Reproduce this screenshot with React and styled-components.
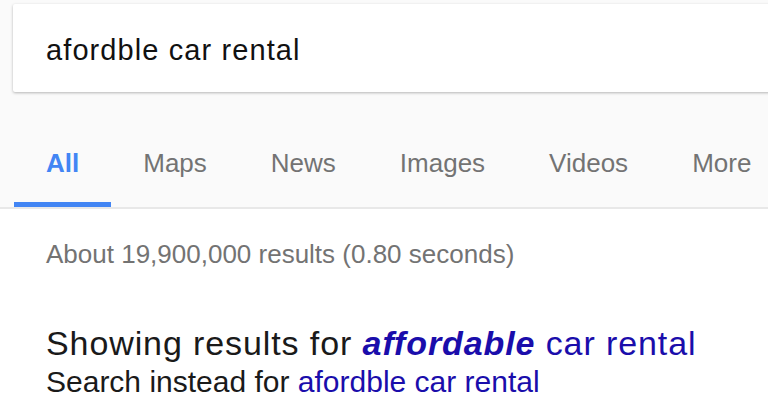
import styled, { createGlobalStyle } from 'styled-components';

const GlobalStyle = createGlobalStyle`
	html, body {
		margin: 0;
		padding: 0;
		background: #fff;
		overflow: hidden;
	}
	body {
		font-family: 'Liberation Sans', Arial, Helvetica, sans-serif;
	}
`;

const Header = styled.header`
	background: #fafafa;
	padding-top: 4px;
	border-bottom: 2px solid #e8e8e8;
`;

const SearchBox = styled.div`
	box-sizing: border-box;
	margin-left: 13px;
	width: calc(100% + 20px);
	height: 88px;
	padding: 5px 0 0 33px;
	background: #fff;
	border-radius: 2px;
	box-shadow: 0 1px 3px rgba(0, 0, 0, 0.28);
	font-size: 29px;
	line-height: 83px;
	letter-spacing: 1.1px;
	color: #111;
	white-space: nowrap;
`;

const Tabs = styled.nav`
	display: flex;
	padding: 56px 0 0 14px;
`;

const Tab = styled.a`
	display: block;
	padding: 0 32px 24px;
	font-size: 26px;
	line-height: 30px;
	font-weight: ${(p) => (p.$active ? 'bold' : 'normal')};
	color: ${(p) => (p.$active ? '#4285f4' : '#737373')};
	border-bottom: 5px solid ${(p) => (p.$active ? '#4285f4' : 'transparent')};
	white-space: nowrap;
	cursor: pointer;
`;

const Results = styled.main`
	padding: 30px 0 0 46px;
	background: #fff;
`;

const Stats = styled.p`
	margin: 0;
	font-size: 26px;
	line-height: 30px;
	color: #737373;
`;

const Spelling = styled.p`
	margin: 54px 0 0;
	font-size: 34px;
	line-height: 41px;
	letter-spacing: 0.9px;
	color: #1a1a1a;
	white-space: nowrap;
`;

const Instead = styled.p`
	margin: 0;
	font-size: 30px;
	line-height: 36px;
	color: #1a1a1a;
	white-space: nowrap;
`;

const Link = styled.a`
	color: #1a0dab;
	text-decoration: none;
	cursor: pointer;

	b {
		font-style: italic;
		font-weight: bold;
	}
`;

const tabs = ['All', 'Maps', 'News', 'Images', 'Videos', 'More'];

function App() {
	return (
		<>
			<GlobalStyle />
			<Header>
				<SearchBox>afordble car rental</SearchBox>
				<Tabs>
					{tabs.map((t, i) => (
						<Tab key={t} $active={i === 0}>
							{t}
						</Tab>
					))}
				</Tabs>
			</Header>
			<Results>
				<Stats>About 19,900,000 results (0.80 seconds)</Stats>
				<Spelling>
					Showing results for{' '}
					<Link>
						<b>affordable</b> car rental
					</Link>
				</Spelling>
				<Instead>
					Search instead for <Link>afordble car rental</Link>
				</Instead>
			</Results>
		</>
	);
}

export default App;
